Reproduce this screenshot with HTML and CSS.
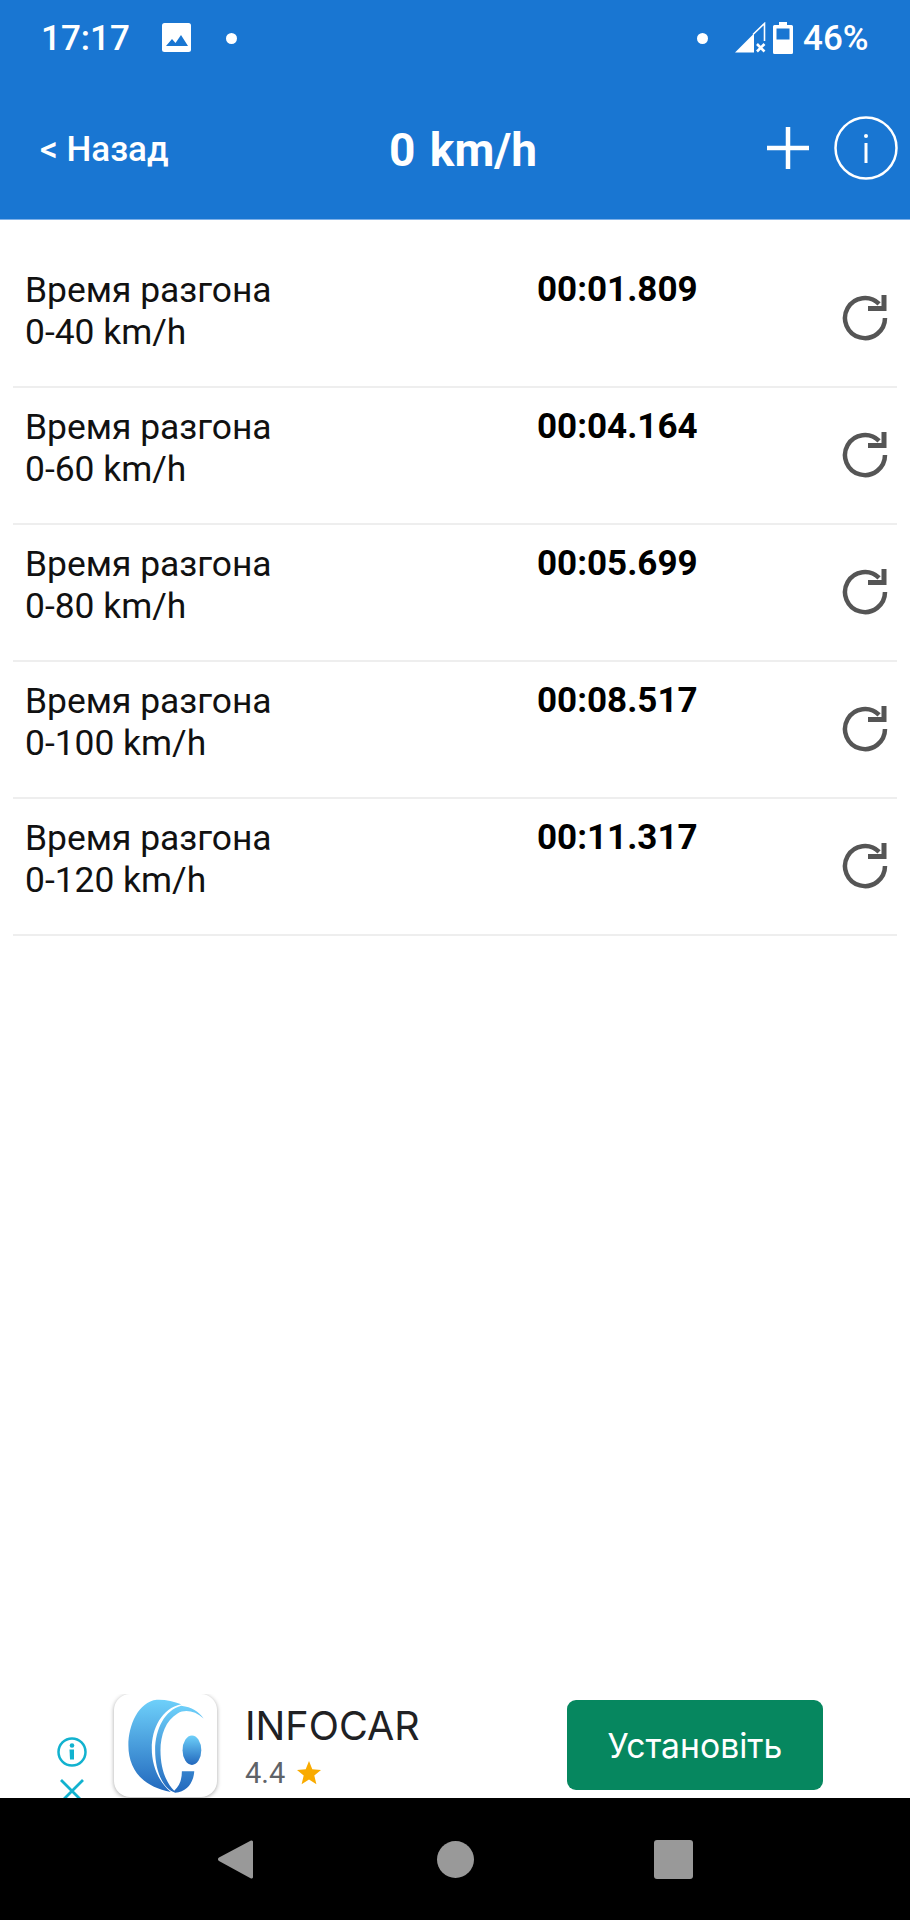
FILE: index.html
```html
<!DOCTYPE html>
<html lang="ru">
<head>
<meta charset="utf-8">
<title>0 km/h</title>
<link rel="stylesheet" href="styles.css">
</head>
<body>
<div class="screen">
  <header class="appbar">
    <div class="status">
      <span class="clock">17:17</span>
      <svg class="ic-photo" viewBox="0 0 29 29"><rect width="29" height="29" rx="2.5" fill="#fff"/><path d="M4 23l6-7 3.500 4L19 12l7 11z" fill="#1976d2"/></svg>
      <span class="dot dot-left"></span>
      <span class="dot dot-right"></span>
      <svg class="ic-signal" viewBox="0 0 33 32"><path d="M1 30.500L20 11.500V30.500z" fill="#fff"/><path d="M19 12.500L30.500 1.500V19" fill="none" stroke="#fff" stroke-width="1.600"/><path d="M23 22l7.500 7.500m0-7.500L23 29.500" stroke="#fff" stroke-width="2.600"/></svg>
      <svg class="ic-battery" viewBox="0 0 20 32"><path d="M6 0h8v3h4.500a1.500 1.500 0 0 1 1.500 1.500V30.500a1.500 1.500 0 0 1-1.500 1.500H1.500A1.500 1.500 0 0 1 0 30.500V4.500A1.500 1.500 0 0 1 1.500 3H6z" fill="#fff"/><rect x="3.500" y="6.500" width="13" height="11" fill="#1976d2"/></svg>
      <span class="pct">46%</span>
    </div>
    <div class="toolbar">
      <span class="back">&lt; Назад</span>
      <span class="title">0 km/h</span>
      <div class="actions">
        <svg class="ic-plus" viewBox="0 0 42 42"><path d="M21 0v42M0 21h42" stroke="#fff" stroke-width="4.500" fill="none"/></svg>
        <svg class="ic-info" viewBox="0 0 64 64"><circle cx="32" cy="32" r="30.500" stroke="#fff" stroke-width="2.500" fill="none"/><path d="M32 27v20" stroke="#fff" stroke-width="3"/><circle cx="32" cy="20" r="2" fill="#fff"/></svg>
      </div>
    </div>
  </header>

  <main class="list">
    <div class="row">
      <div class="label">Время разгона<br>0-40 km/h</div>
      <div class="time">00:01.809</div>
      <svg class="ic-reload" viewBox="0 0 46 46"><path d="M43 23A20 20 0 1 1 37.100 8.900" fill="none" stroke="#555" stroke-width="4.500"/><path d="M26 13.500H42V0" fill="none" stroke="#555" stroke-width="5"/></svg>
    </div>
    <div class="row">
      <div class="label">Время разгона<br>0-60 km/h</div>
      <div class="time">00:04.164</div>
      <svg class="ic-reload" viewBox="0 0 46 46"><path d="M43 23A20 20 0 1 1 37.100 8.900" fill="none" stroke="#555" stroke-width="4.500"/><path d="M26 13.500H42V0" fill="none" stroke="#555" stroke-width="5"/></svg>
    </div>
    <div class="row">
      <div class="label">Время разгона<br>0-80 km/h</div>
      <div class="time">00:05.699</div>
      <svg class="ic-reload" viewBox="0 0 46 46"><path d="M43 23A20 20 0 1 1 37.100 8.900" fill="none" stroke="#555" stroke-width="4.500"/><path d="M26 13.500H42V0" fill="none" stroke="#555" stroke-width="5"/></svg>
    </div>
    <div class="row">
      <div class="label">Время разгона<br>0-100 km/h</div>
      <div class="time">00:08.517</div>
      <svg class="ic-reload" viewBox="0 0 46 46"><path d="M43 23A20 20 0 1 1 37.100 8.900" fill="none" stroke="#555" stroke-width="4.500"/><path d="M26 13.500H42V0" fill="none" stroke="#555" stroke-width="5"/></svg>
    </div>
    <div class="row">
      <div class="label">Время разгона<br>0-120 km/h</div>
      <div class="time">00:11.317</div>
      <svg class="ic-reload" viewBox="0 0 46 46"><path d="M43 23A20 20 0 1 1 37.100 8.900" fill="none" stroke="#555" stroke-width="4.500"/><path d="M26 13.500H42V0" fill="none" stroke="#555" stroke-width="5"/></svg>
    </div>
  </main>

  <aside class="ad">
    <div class="ad-choices">
      <svg class="ic-adinfo" viewBox="0 0 30 30"><circle cx="15" cy="15" r="13.500" fill="none" stroke="#12b2cf" stroke-width="2.500"/><circle cx="15" cy="8.500" r="2.300" fill="#12b2cf"/><path d="M12.500 12.500h4.500v10h-4z" fill="#12b2cf"/></svg>
      <svg class="ic-adclose" viewBox="0 0 24 24"><path d="M1 1l22 22M23 1L1 23" stroke="#12b2cf" stroke-width="2.800"/></svg>
    </div>
    <div class="ad-logo">
      <svg viewBox="42 27 308 308">
        <defs><linearGradient id="tire" x1="0" y1="0" x2="0" y2="1"><stop offset="0" stop-color="#6ed0fa"/><stop offset="1" stop-color="#2268bd"/></linearGradient></defs>
        <path d="M170 44C115 50 85 120 85 180C85 255 130 305 212 320C175 290 155 240 155 190C155 130 185 70 243 58C220 48 195 43 170 44Z" fill="url(#tire)"/>
        <path d="M243 62C275 66 295 80 310 100C285 78 255 72 232 85C197 105 181 150 181 195C181 245 195 290 222 316C240 300 245 280 245 258L282 258C280 290 262 320 225 322C190 312 165 260 165 195C165 130 195 75 243 62Z" fill="url(#tire)"/>
        <ellipse cx="275" cy="195" rx="28" ry="44" fill="url(#tire)"/>
      </svg>
    </div>
    <div class="ad-text">
      <div class="ad-name">INFOCAR</div>
      <div class="ad-rating">4.4
        <svg class="ic-star" viewBox="0 0 24 24"><path d="M12 0l3.300 8.300 8.700.6-6.700 5.600 2.100 8.700L12 18.500l-7.400 4.700 2.100-8.700L0 8.900l8.700-.6z" fill="#f9ab00"/></svg>
      </div>
    </div>
    <div class="ad-btn">Установіть</div>
  </aside>

  <nav class="navbar">
    <svg class="ic-navback" viewBox="0 0 36 41"><path d="M34 1.500L2 18.500a2 2 0 0 0 0 3.500L34 39.500a1.500 1.500 0 0 0 2-1.500V3a1.500 1.500 0 0 0-2-1.500z" fill="#999"/></svg>
    <span class="nav-home"></span>
    <span class="nav-recent"></span>
  </nav>
</div>
</body>
</html>
```

FILE: styles.css
```css
* { box-sizing: border-box; }
html, body { margin: 0; padding: 0; background: #fff; }
body { font-family: Roboto, "Liberation Sans", sans-serif; }

.screen {
  width: 910px;
  height: 1920px;
  display: flex;
  flex-direction: column;
  overflow: hidden;
}

.appbar {
  height: 220px;
  background: #1976d2;
  border-bottom: 1px solid #7fb1e8;
  color: #fff;
  flex: none;
}

.status {
  height: 76px;
  display: flex;
  align-items: center;
  padding-left: 41px;
}
.clock { font-size: 35px; font-weight: 500; width: 121px; }
.ic-photo { width: 29px; height: 29px; margin-top: -1px; }
.dot { width: 11px; height: 11px; border-radius: 50%; background: #fff; flex: none; }
.dot-left { margin-left: 35px; }
.dot-right { margin-left: 460px; }
.ic-signal { width: 33px; height: 32px; margin-left: 26px; }
.ic-battery { width: 20px; height: 32px; margin-left: 6px; margin-top: -1px; }
.pct { font-size: 35px; font-weight: 500; margin-left: 10px; }

.toolbar {
  height: 143px;
  display: flex;
  align-items: center;
  padding-top: 4px;
  padding-left: 40px;
  padding-right: 12px;
}
.back { font-size: 35px; font-weight: 500; width: 349px; }
.title { font-size: 46px; font-weight: 700; word-spacing: 3px; }
.actions {
  margin-left: auto;
  margin-top: -4px;
  display: flex;
  align-items: center;
  gap: 25px;
}
.ic-plus { width: 42px; height: 42px; }
.ic-info { width: 64px; height: 64px; }

.list {
  flex: 1;
  padding-top: 31px;
  margin: 0 13px;
}
.row {
  height: 137px;
  display: flex;
  align-items: flex-start;
  padding: 18px 9px 0 12px;
  border-bottom: 2px solid #eeeeee;
}
.label {
  width: 512px;
  font-size: 35.4px;
  line-height: 42px;
  color: #111;
}
.time {
  font-size: 35px;
  line-height: 42px;
  font-weight: 700;
  color: #000;
}
.ic-reload { width: 46px; height: 46px; margin-left: auto; margin-top: 26px; }

.ad {
  height: 104px;
  flex: none;
  display: flex;
  align-items: flex-start;
  padding-left: 57px;
  padding-right: 87px;
  overflow: hidden;
}
.ad-choices {
  width: 30px;
  display: flex;
  flex-direction: column;
  align-items: center;
  padding-top: 43px;
  gap: 12px;
  flex: none;
}
.ic-adinfo { width: 30px; height: 30px; }
.ic-adclose { width: 24px; height: 24px; }
.ad-logo {
  width: 103px;
  height: 103px;
  margin-left: 27px;
  border-radius: 16px;
  background: #fff;
  box-shadow: 0 1px 4px rgba(0, 0, 0, .35);
  flex: none;
}
.ad-logo svg { width: 103px; height: 103px; display: block; }
.ad-text { margin-left: 28px; padding-top: 9px; }
.ad-name { font-family: Inter, sans-serif; font-size: 39.5px; line-height: 46px; color: #202124; }
.ad-rating {
  font-family: Roboto, sans-serif;
  font-size: 29px;
  line-height: 34px;
  margin-top: 7px;
  color: #5f6368;
  display: flex;
  align-items: center;
  gap: 12px;
}
.ic-star { width: 24px; height: 24px; }
.ad-btn {
  margin-left: auto;
  margin-top: 6px;
  width: 256px;
  height: 90px;
  border-radius: 9px;
  background: #06875f;
  color: #fff;
  font-family: Inter, sans-serif;
  font-size: 33.7px;
  display: flex;
  align-items: center;
  justify-content: center;
}

.navbar {
  height: 122px;
  flex: none;
  background: #000;
  display: flex;
  align-items: center;
  padding-left: 217px;
}
.ic-navback { width: 36px; height: 41px; }
.nav-home { width: 37px; height: 37px; border-radius: 50%; background: #999; margin-left: 184px; }
.nav-recent { width: 39px; height: 39px; border-radius: 3px; background: #999; margin-left: 180px; }
```
